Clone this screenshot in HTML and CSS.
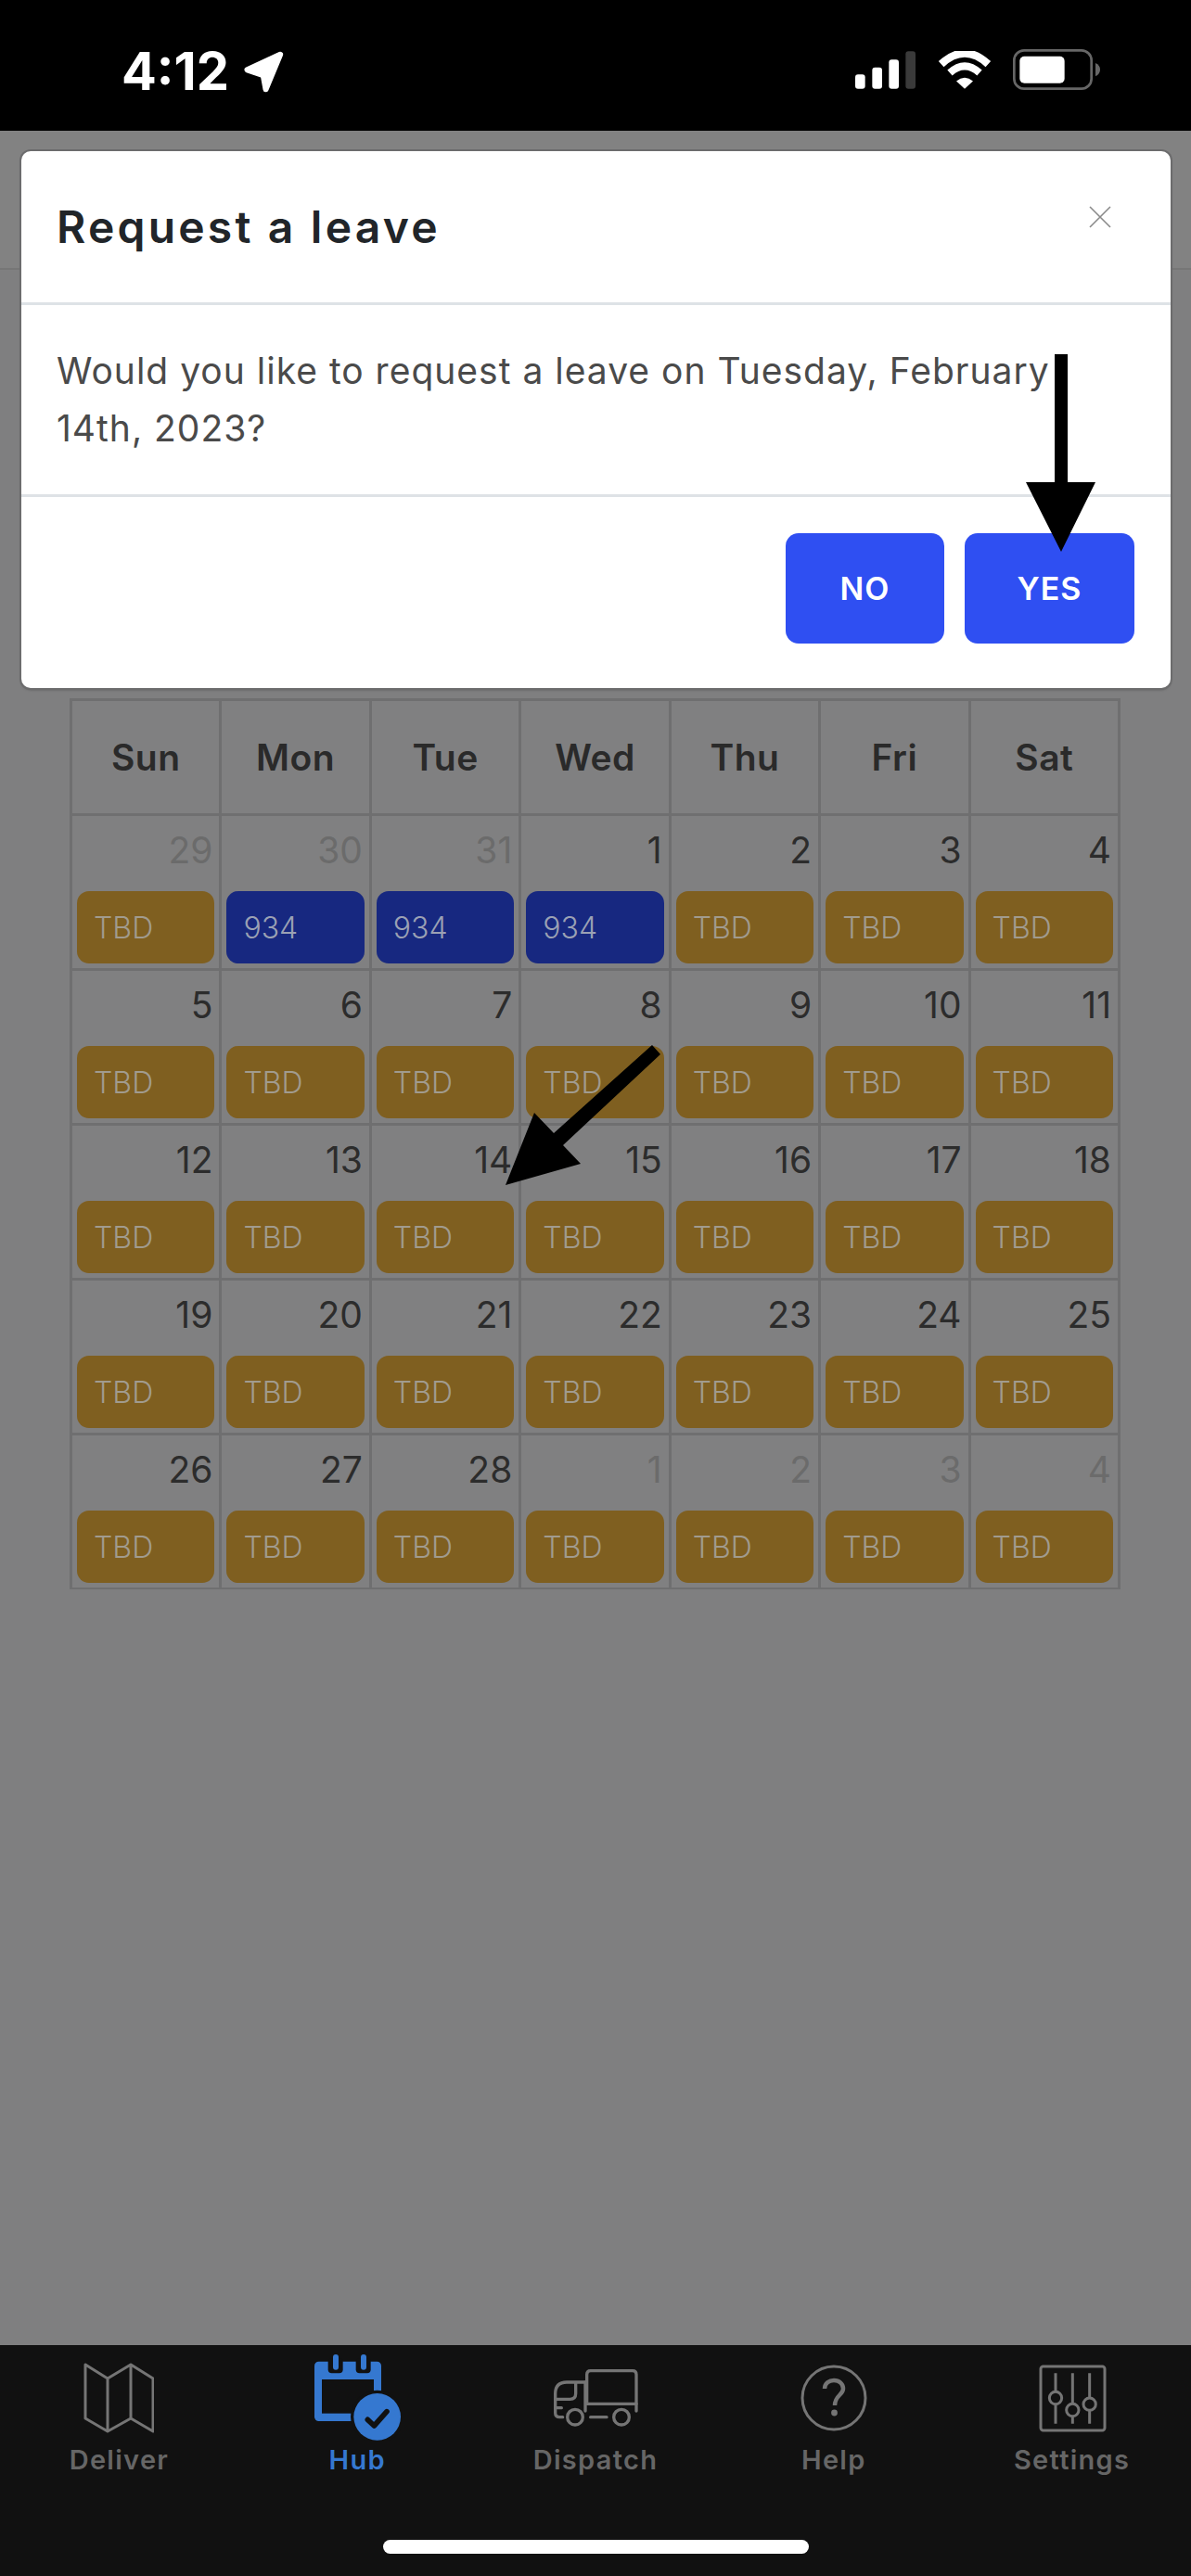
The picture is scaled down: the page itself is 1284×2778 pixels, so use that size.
FILE: index.html
```html
<!DOCTYPE html>
<html lang="en">
<head>
    <meta charset="UTF-8">
    <meta name="viewport" content="width=device-width, initial-scale=1.0">
    <title>Request a leave</title>
    <link rel="stylesheet" href="styles.css">
</head>
<body>
    <div class="app">
        <div class="statusbar">
            <div class="status-left">
                <span class="time">4:12</span>
                <svg class="loc" viewBox="428 45 132 133"><path d="M546 56 L441 105 L487 121 Q492 123 493 128 L500 167 Z" fill="#fff" stroke="#fff" stroke-width="18" stroke-linejoin="round"/></svg>
            </div>
            <div class="status-right">
                <svg class="signal" viewBox="75 45 195 122">
                    <rect x="75" y="120" width="32" height="47" rx="9" fill="#fff"/>
                    <rect x="130" y="98" width="32" height="69" rx="9" fill="#fff"/>
                    <rect x="184" y="72" width="32" height="95" rx="9" fill="#fff"/>
                    <rect x="238" y="45" width="32" height="122" rx="9" fill="#3a3a3a"/>
                </svg>
                <svg class="wifi" viewBox="338 45 174 122">
                    <path d="M349 87 Q425 17 501 87" fill="none" stroke="#fff" stroke-width="25"/>
                    <path d="M377 115 Q425 72 473 115" fill="none" stroke="#fff" stroke-width="24"/>
                    <path d="M398 142 Q425 120 452 142 L425 167 Z" fill="#fff"/>
                </svg>
                <svg class="battery" viewBox="578 40 285 132">
                    <rect x="582" y="44" width="250" height="124" rx="32" fill="none" stroke="#666" stroke-width="8"/>
                    <rect x="600" y="63" width="145" height="87" rx="15" fill="#fff"/>
                    <path d="M845 85 Q860 92 860 106 Q860 121 845 128 Z" fill="#666"/>
                </svg>
            </div>
        </div>

        <div class="main">
            <div class="page-head"></div>

            <div class="calendar">
                <div class="cell head">Sun</div>
                <div class="cell head">Mon</div>
                <div class="cell head">Tue</div>
                <div class="cell head">Wed</div>
                <div class="cell head">Thu</div>
                <div class="cell head">Fri</div>
                <div class="cell head">Sat</div>

                <div class="cell"><span class="date muted">29</span><span class="pill tbd">TBD</span></div>
                <div class="cell"><span class="date muted">30</span><span class="pill route">934</span></div>
                <div class="cell"><span class="date muted">31</span><span class="pill route">934</span></div>
                <div class="cell"><span class="date">1</span><span class="pill route">934</span></div>
                <div class="cell"><span class="date">2</span><span class="pill tbd">TBD</span></div>
                <div class="cell"><span class="date">3</span><span class="pill tbd">TBD</span></div>
                <div class="cell"><span class="date">4</span><span class="pill tbd">TBD</span></div>

                <div class="cell"><span class="date">5</span><span class="pill tbd">TBD</span></div>
                <div class="cell"><span class="date">6</span><span class="pill tbd">TBD</span></div>
                <div class="cell"><span class="date">7</span><span class="pill tbd">TBD</span></div>
                <div class="cell"><span class="date">8</span><span class="pill tbd">TBD</span></div>
                <div class="cell"><span class="date">9</span><span class="pill tbd">TBD</span></div>
                <div class="cell"><span class="date">10</span><span class="pill tbd">TBD</span></div>
                <div class="cell"><span class="date">11</span><span class="pill tbd">TBD</span></div>

                <div class="cell"><span class="date">12</span><span class="pill tbd">TBD</span></div>
                <div class="cell"><span class="date">13</span><span class="pill tbd">TBD</span></div>
                <div class="cell"><span class="date">14</span><span class="pill tbd">TBD</span></div>
                <div class="cell"><span class="date">15</span><span class="pill tbd">TBD</span></div>
                <div class="cell"><span class="date">16</span><span class="pill tbd">TBD</span></div>
                <div class="cell"><span class="date">17</span><span class="pill tbd">TBD</span></div>
                <div class="cell"><span class="date">18</span><span class="pill tbd">TBD</span></div>

                <div class="cell"><span class="date">19</span><span class="pill tbd">TBD</span></div>
                <div class="cell"><span class="date">20</span><span class="pill tbd">TBD</span></div>
                <div class="cell"><span class="date">21</span><span class="pill tbd">TBD</span></div>
                <div class="cell"><span class="date">22</span><span class="pill tbd">TBD</span></div>
                <div class="cell"><span class="date">23</span><span class="pill tbd">TBD</span></div>
                <div class="cell"><span class="date">24</span><span class="pill tbd">TBD</span></div>
                <div class="cell"><span class="date">25</span><span class="pill tbd">TBD</span></div>

                <div class="cell"><span class="date">26</span><span class="pill tbd">TBD</span></div>
                <div class="cell"><span class="date">27</span><span class="pill tbd">TBD</span></div>
                <div class="cell"><span class="date">28</span><span class="pill tbd">TBD</span></div>
                <div class="cell"><span class="date muted">1</span><span class="pill tbd">TBD</span></div>
                <div class="cell"><span class="date muted">2</span><span class="pill tbd">TBD</span></div>
                <div class="cell"><span class="date muted">3</span><span class="pill tbd">TBD</span></div>
                <div class="cell"><span class="date muted">4</span><span class="pill tbd">TBD</span></div>
            </div>

            <div class="modal">
                <div class="modal-head">
                    <h2 class="modal-title">Request a leave</h2>
                    <svg class="close" viewBox="0 0 24 24"><path d="M1 1 L23 23 M23 1 L1 23" stroke="#8a8a8a" stroke-width="1.6" fill="none"/></svg>
                </div>
                <div class="modal-body">Would you like to request a leave on Tuesday, February 14th, 2023?</div>
                <div class="modal-foot">
                    <button class="btn btn-no">NO</button>
                    <button class="btn btn-yes">YES</button>
                </div>
            </div>
        </div>

        <div class="tabbar">
            <div class="tab">
                <div class="tab-icon">
                    <svg width="76" height="76" viewBox="0 0 76 76" fill="none" stroke="#757575" stroke-width="3" stroke-linejoin="round"><path d="M2 2 L26 17 L51 2 L75 17 L75 74 L51 60 L26 74 L2 60 Z M26 17 V74 M51 2 V60"/></svg>
                </div>
                <span class="tab-label">Deliver</span>
            </div>
            <div class="tab active">
                <div class="tab-icon">
                    <svg width="93" height="93" viewBox="54 27 279 279">
                        <rect x="54" y="50" width="216" height="193" rx="14" fill="#3578d0"/>
                        <rect x="78" y="108" width="168" height="110" fill="#111"/>
                        <rect x="98" y="40" width="48" height="48" rx="12" fill="#111"/>
                        <rect x="188" y="40" width="48" height="48" rx="12" fill="#111"/>
                        <rect x="114" y="27" width="18" height="50" rx="9" fill="#3578d0"/>
                        <rect x="204" y="27" width="18" height="50" rx="9" fill="#3578d0"/>
                        <circle cx="257" cy="229" r="86" fill="#111"/>
                        <circle cx="257" cy="229" r="76" fill="#3578d0"/>
                        <path d="M226 238 L247 258 L288 212" fill="none" stroke="#111" stroke-width="17" stroke-linecap="round" stroke-linejoin="round"/>
                    </svg>
                </div>
                <span class="tab-label">Hub</span>
            </div>
            <div class="tab">
                <div class="tab-icon">
                    <svg width="110" height="85" viewBox="3 7 330 255" fill="none" stroke="#757575" stroke-width="10" stroke-linecap="round" stroke-linejoin="round">
                        <path d="M140 155 V60 Q140 48 152 48 H288 Q300 48 300 60 V178"/>
                        <path d="M140 155 H300"/>
                        <path d="M135 85 H75 Q38 85 38 122 V185 Q38 198 52 198 H62"/>
                        <path d="M104 88 V122 Q104 140 86 140 H38"/>
                        <path d="M38 168 H58 M135 85 V178"/>
                        <circle cx="102" cy="198" r="25"/>
                        <circle cx="252" cy="198" r="25"/>
                        <path d="M152 198 H204"/>
                    </svg>
                </div>
                <span class="tab-label">Dispatch</span>
            </div>
            <div class="tab">
                <div class="tab-icon">
                    <svg width="74" height="74" viewBox="0 0 74 74" fill="none" stroke="#757575">
                        <circle cx="37" cy="37" r="34" stroke-width="3"/>
                        <path d="M27 27 C27 21 32 18 37 18 C43 18 47 22 47 27 C47 34 38 34 38 45" stroke-width="4.5"/>
                        <circle cx="37.5" cy="53" r="3.4" fill="#757575" stroke="none"/>
                    </svg>
                </div>
                <span class="tab-label">Help</span>
            </div>
            <div class="tab">
                <div class="tab-icon">
                    <svg width="90" height="90" viewBox="0 0 270 270" fill="none" stroke="#757575" stroke-width="9">
                        <rect x="33" y="33" width="207" height="207" rx="8"/>
                        <path d="M81 55 V218 M136 55 V218 M191 55 V218"/>
                        <circle cx="81" cy="135" r="20" fill="#111"/>
                        <circle cx="136" cy="174" r="20" fill="#111"/>
                        <circle cx="191" cy="155" r="20" fill="#111"/>
                    </svg>
                </div>
                <span class="tab-label">Settings</span>
            </div>
            <div class="home-bar"></div>
        </div>

        <!-- annotation arrows drawn on top of the screenshot -->
        <svg class="arrows" width="1284" height="2778" viewBox="0 0 1284 2778">
            <path d="M1137 382 H1151 V520 H1181 L1144 595 L1106 520 H1137 Z"/>
            <path d="M703 1127 L712 1137 L607 1235 L626 1255 L545 1278 L576 1200 L597 1222 Z"/>
        </svg>
    </div>
</body>
</html>
```

FILE: styles.css
```css
* {
    box-sizing: border-box;
}
body {
    margin: 0;
    font-family: 'Inter', 'Open Sans', sans-serif;
    background-color: #000;
}
.app {
    position: relative;
    width: 1284px;
    height: 2778px;
    display: flex;
    flex-direction: column;
    overflow: hidden;
}

/* status bar */
.statusbar {
    height: 141px;
    flex-shrink: 0;
    background-color: #000;
    display: flex;
    justify-content: space-between;
    align-items: flex-start;
    padding: 53px 97px 0 131px;
}
.status-left {
    display: flex;
    align-items: center;
    gap: 15px;
}
.time {
    color: #fff;
    font-size: 56px;
    font-weight: 700;
    line-height: 48px;
    letter-spacing: 0;
}
.loc {
    width: 45px;
    height: 45px;
}
.status-right {
    display: flex;
    align-items: center;
    gap: 24px;
}
.signal {
    width: 65px;
    height: 41px;
}
.wifi {
    width: 58px;
    height: 41px;
}
.battery {
    width: 95px;
    height: 44px;
    margin-left: -1px;
}

/* dimmed page behind the dialog, colours are as they look under the scrim */
.main {
    position: relative;
    flex: 1;
    background-color: #7f7f80;
}
.page-head {
    height: 150px;
    background-color: #828282;
    border-bottom: 2px solid #767676;
}
.calendar {
    margin: 462px 76px 0 75px;
    display: grid;
    grid-template-columns: repeat(7, 1fr);
    grid-template-rows: 121px repeat(5, 164px);
    gap: 3px;
    padding: 3px 3px 2px;
    background-color: #6f6f70;
}
.cell {
    background-color: #808081;
    display: flex;
    flex-direction: column;
    align-items: stretch;
    padding: 8px 5px 5px;
}
.head {
    justify-content: center;
    align-items: center;
    padding: 0;
    font-size: 39px;
    font-weight: 600;
    letter-spacing: 0.5px;
    color: #2a2a2a;
}
.date {
    text-align: right;
    padding-right: 2px;
    font-size: 39px;
    line-height: 58px;
    color: #2c2c2c;
}
.date.muted {
    color: #6b6b6b;
}
.pill {
    margin-top: auto;
    height: 78px;
    border-radius: 13px;
    display: flex;
    align-items: center;
    padding-left: 18px;
    font-size: 32px;
    font-weight: 300;
}
.tbd {
    background-color: #7f5f20;
    color: #a19b8e;
}
.route {
    background-color: #172880;
    color: #9ba1b4;
}

/* dialog */
.modal {
    position: absolute;
    top: 22px;
    left: 23px;
    right: 22px;
    height: 579px;
    background-color: #fff;
    border-radius: 10px;
    box-shadow: 0 0 0 2px #6c6c6d, 0 2px 3px rgba(0, 0, 0, 0.3);
    display: flex;
    flex-direction: column;
}
.modal-head {
    height: 166px;
    flex-shrink: 0;
    display: flex;
    justify-content: space-between;
    align-items: center;
    padding: 0 64px 0 38px;
    border-bottom: 3px solid #dee2e6;
}
.modal-title {
    margin: 0;
    font-size: 48px;
    font-weight: 600;
    letter-spacing: 3.2px;
    color: #212529;
}
.close {
    width: 24px;
    height: 24px;
    margin-top: -22px;
}
.modal-body {
    height: 207px;
    flex-shrink: 0;
    padding: 40px 38px;
    font-size: 39px;
    line-height: 62px;
    letter-spacing: 1px;
    color: #4a4a4a;
    border-bottom: 3px solid #dee2e6;
}
.modal-foot {
    flex: 1;
    display: flex;
    justify-content: flex-end;
    align-items: flex-start;
    gap: 22px;
    padding: 39px 39px 0 0;
}
.btn {
    height: 119px;
    border: none;
    border-radius: 14px;
    background-color: #2f4ff2;
    color: #fff;
    font-family: inherit;
    font-size: 34px;
    font-weight: 600;
    letter-spacing: 1px;
}
.btn-no {
    width: 171px;
}
.btn-yes {
    width: 183px;
}

/* bottom tabs */
.tabbar {
    position: relative;
    height: 249px;
    flex-shrink: 0;
    background-color: #111;
    display: flex;
    padding-top: 10px;
}
.tab {
    flex: 1;
    display: flex;
    flex-direction: column;
    align-items: center;
    color: #666;
}
.tab.active {
    color: #3578d0;
}
.tab-icon {
    height: 93px;
    display: flex;
    align-items: center;
    justify-content: center;
}
.tab-label {
    margin-top: 3px;
    font-size: 29px;
    font-weight: 600;
    line-height: 36px;
    letter-spacing: 1.3px;
}
.home-bar {
    position: absolute;
    left: 413px;
    bottom: 24px;
    width: 459px;
    height: 15px;
    border-radius: 8px;
    background-color: #fff;
}

.arrows {
    position: absolute;
    top: 0;
    left: 0;
    pointer-events: none;
}
```
